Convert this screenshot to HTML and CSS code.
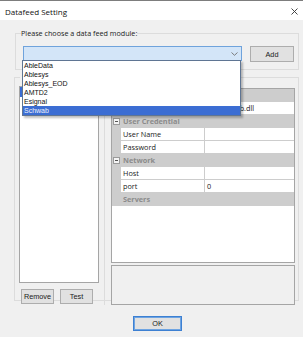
FILE: index.html
```html
<!DOCTYPE html>
<html lang="en">
<head>
    <meta charset="UTF-8">
    <meta name="viewport" content="width=device-width, initial-scale=1.0">
    <title>Datafeed Setting</title>
    <link rel="stylesheet" href="styles.css">
</head>
<body>
    <div class="window">
        <div class="titlebar">
            <span class="title">Datafeed Setting</span>
            <svg class="close" width="7" height="7" viewBox="0 0 7 7">
                <path d="M0.5 0.5 L6.5 6.5 M6.5 0.5 L0.5 6.5" stroke="#333" stroke-width="0.9" fill="none"/>
            </svg>
        </div>
        <div class="client">
            <fieldset class="group group-module">
                <legend>Please choose a data feed module:</legend>
                <div class="module-row">
                    <div class="combo">
                        <svg class="combo-arrow" width="7" height="4" viewBox="0 0 7 4">
                            <path d="M0.5 0.5 L3.5 3.3 L6.5 0.5" stroke="#707070" stroke-width="0.9" fill="none"/>
                        </svg>
                        <ul class="dropdown">
                            <li>AbleData</li>
                            <li>Ablesys</li>
                            <li>Ablesys_EOD</li>
                            <li>AMTD2</li>
                            <li>Esignal</li>
                            <li class="active">Schwab</li>
                        </ul>
                    </div>
                    <button class="btn btn-add">Add</button>
                </div>
            </fieldset>

            <fieldset class="group group-settings">
                <!-- caption sits under the open dropdown -->
                <legend class="blank-legend"></legend>
                <div class="split">
                    <div class="left-pane">
                        <ul class="listbox">
                            <li class="selected"></li>
                        </ul>
                        <div class="pane-buttons">
                            <button class="btn btn-small">Remove</button>
                            <button class="btn btn-small">Test</button>
                        </div>
                    </div>
                    <div class="right-pane">
                        <div class="propgrid">
                            <div class="prop-row category">
                                <span class="margin"></span>
                            </div>
                            <div class="prop-row">
                                <span class="margin"></span>
                                <span class="name"></span>
                                <span class="value">DF.Schwab.dll</span>
                            </div>
                            <div class="prop-row category">
                                <span class="margin"><span class="toggle"></span></span>
                                <span class="cat-name">User Credential</span>
                            </div>
                            <div class="prop-row">
                                <span class="margin"></span>
                                <span class="name">User Name</span>
                                <span class="value"></span>
                            </div>
                            <div class="prop-row">
                                <span class="margin"></span>
                                <span class="name">Password</span>
                                <span class="value"></span>
                            </div>
                            <div class="prop-row category">
                                <span class="margin"><span class="toggle"></span></span>
                                <span class="cat-name">Network</span>
                            </div>
                            <div class="prop-row">
                                <span class="margin"></span>
                                <span class="name">Host</span>
                                <span class="value"></span>
                            </div>
                            <div class="prop-row">
                                <span class="margin"></span>
                                <span class="name">port</span>
                                <span class="value">0</span>
                            </div>
                            <div class="prop-row category">
                                <span class="margin"></span>
                                <span class="cat-name">Servers</span>
                            </div>
                        </div>
                        <div class="description"></div>
                    </div>
                </div>
            </fieldset>

            <div class="footer">
                <button class="btn btn-default">OK</button>
            </div>
        </div>
    </div>
</body>
</html>
```

FILE: styles.css
```css
body {
    margin: 0;
    background-color: #f0f0f0;
    font-family: "Open Sans", "Noto Sans", sans-serif;
    color: #1a1a1a;
}

.window {
    width: 303px;
    height: 337px;
    overflow: hidden;
    border-top: 1px solid #7d7d7d;
    box-sizing: border-box;
    background-color: #f0f0f0;
}

.titlebar {
    height: 19px;
    background-color: white;
    display: flex;
    align-items: center;
    justify-content: space-between;
    padding: 2px 5px 0 5px;
    box-sizing: border-box;
}

.title {
    font-size: 8px;
    color: #111;
}

.close {
    display: block;
}

.client {
    display: flex;
    flex-direction: column;
}

.group {
    border: 1px solid #dcdcdc;
    margin: 0;
    min-width: 0;
}

.group legend {
    font-size: 7.2px;
    line-height: 12px;
    padding: 0;
    margin-left: -2px;
}

.group-module {
    width: 284px;
    margin: 7px 0 0 15px;
    padding: 7px 4px 7px 7px;
    box-sizing: border-box;
}

.module-row {
    display: flex;
    align-items: flex-start;
    justify-content: space-between;
}

.combo {
    position: relative;
    width: 219px;
    height: 15px;
    background-color: #d3e5f8;
    border: 1px solid #6fa3dc;
    box-sizing: border-box;
}

.combo-arrow {
    position: absolute;
    right: 3px;
    top: 5px;
}

.dropdown {
    position: absolute;
    top: 13px;
    left: -2px;
    width: 219px;
    margin: 0;
    padding: 0;
    list-style: none;
    background-color: white;
    border: 1px solid #5f7593;
    box-sizing: border-box;
    box-shadow: 2px 2px 2px rgba(0, 0, 0, 0.25);
    z-index: 10;
    font-family: "Liberation Sans", Arial, sans-serif;
    font-size: 7px;
}

.dropdown li {
    height: 9px;
    line-height: 9px;
    padding-left: 1px;
    color: #111;
}

.dropdown li.active {
    background-color: #3b6dd3;
    color: #eef2fb;
}

.btn {
    background-color: #e1e1e1;
    border: 1px solid #adadad;
    font-family: "Liberation Sans", Arial, sans-serif;
    font-size: 7.3px;
    color: #1a1a1a;
    padding: 0;
    box-sizing: border-box;
}

.btn-add {
    width: 44px;
    height: 16px;
}

.group-settings {
    width: 285px;
    height: 230px;
    margin: 1px 0 0 14px;
    padding: 0;
    box-sizing: border-box;
}

.group-settings .blank-legend {
    margin-left: 5px;
    width: 40px;
    height: 12px;
}

.split {
    display: flex;
    height: 100%;
}

.left-pane {
    width: 89px;
    border-right: 1px solid #dcdcdc;
    display: flex;
    flex-direction: column;
}

.listbox {
    list-style: none;
    margin: 3px 0 0 4px;
    padding: 0;
    width: 80px;
    height: 197px;
    background-color: white;
    border: 1px solid #a5a5a5;
    box-sizing: border-box;
}

.listbox li {
    height: 10px;
}

.listbox li.selected {
    background-color: #3b6dd3;
}

.pane-buttons {
    display: flex;
    gap: 6px;
    margin: 6px 0 0 6px;
}

.btn-small {
    width: 33px;
    height: 15px;
}

.right-pane {
    flex: 1;
    display: flex;
    flex-direction: column;
    padding: 5px 3px 0 6px;
}

.propgrid {
    height: 175px;
    background-color: white;
    border: 1px solid #a5a5a5;
    box-sizing: border-box;
    font-size: 7.3px;
}

.prop-row {
    display: flex;
    height: 13px;
}

.prop-row .margin {
    width: 9px;
    flex: none;
    background-color: #cdcdcd;
    display: flex;
    align-items: center;
    justify-content: center;
}

.prop-row .name {
    width: 81px;
    flex: none;
    padding-left: 2px;
    line-height: 12px;
    border-right: 1px solid #cdcdcd;
    border-bottom: 1px solid #cdcdcd;
    white-space: nowrap;
    overflow: hidden;
}

.prop-row .value {
    flex: 1;
    padding-left: 2px;
    line-height: 12px;
    border-bottom: 1px solid #cdcdcd;
    white-space: nowrap;
    overflow: hidden;
}

.prop-row.category {
    background-color: #cdcdcd;
}

.cat-name {
    padding-left: 2px;
    line-height: 13px;
    font-weight: bold;
    color: #8b8b8b;
}

.toggle {
    position: relative;
    width: 5px;
    height: 5px;
    border: 1px solid #9a9a9a;
    background-color: #f4f4f4;
}

.toggle::after {
    content: "";
    position: absolute;
    left: 1px;
    top: 2px;
    width: 3px;
    height: 1px;
    background-color: #555;
}

.description {
    height: 40px;
    margin-top: 2px;
    border: 1px solid #a5a5a5;
    box-sizing: border-box;
    background-color: #f0f0f0;
}

.footer {
    padding: 8px 0 0 133px;
}

.btn-default {
    width: 49px;
    height: 15px;
    border: 1px solid #3d80d2;
    box-shadow: inset 0 0 0 1px #6ea4e2;
}
```
